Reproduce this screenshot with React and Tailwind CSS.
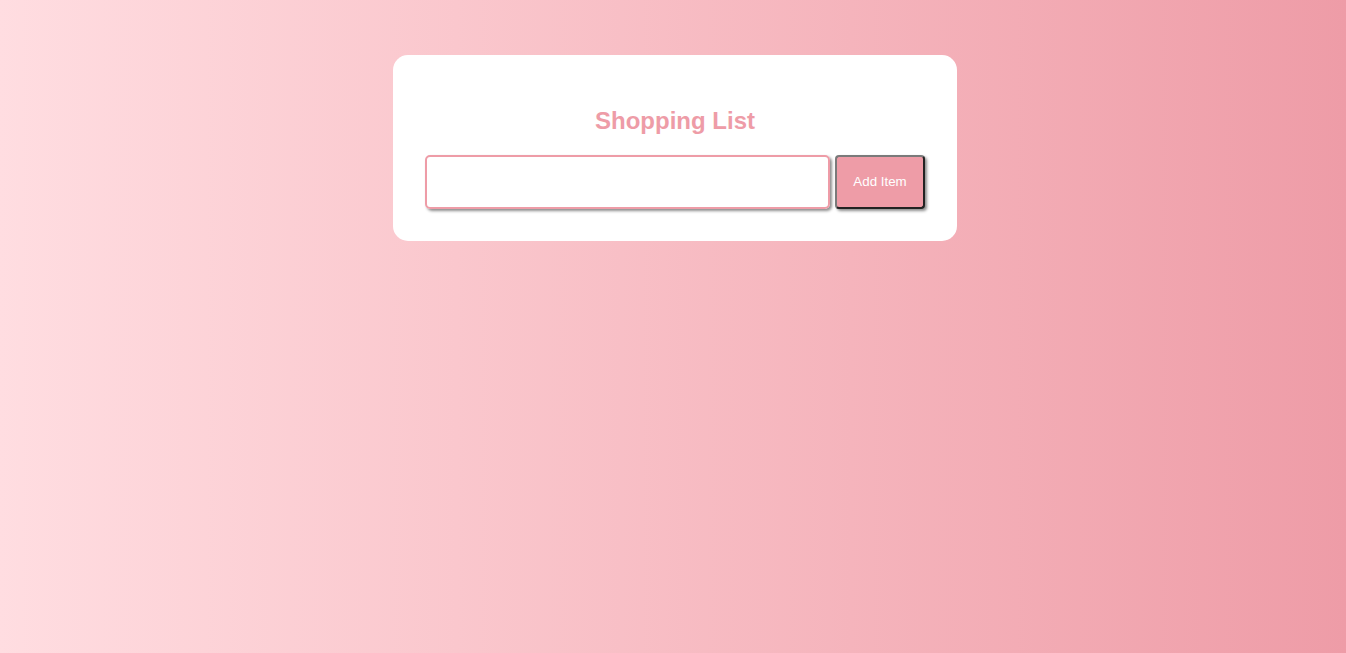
import { useState } from 'react';

export default function App() {
    const [item, setItem] = useState('');
    const [items, setItems] = useState([]);

    const addItem = () => {
        if (!item.trim()) return;
        setItems([...items, item.trim()]);
        setItem('');
    };

    return (
        <div className="min-h-[653px] w-full bg-gradient-to-r from-[#ffdde1] to-[#ee9ca7] font-['Liberation_Sans',Arial,sans-serif] pt-[55px] pl-1">
            <div className="mx-auto w-[564px] bg-white rounded-[15px] p-8">
                <h2 className="text-center text-[24px] leading-[28px] font-bold text-[#ee9ca7] mt-[20px] mb-[20px]">
                    Shopping List
                </h2>
                <div className="flex gap-[5px]">
                    <input
                        type="text"
                        value={item}
                        onChange={(e) => setItem(e.target.value)}
                        className="flex-1 h-[54px] px-[15px] text-base border-2 border-[#ee9ca7] rounded-[5px] outline-none shadow-[2px_2px_3px_rgba(0,0,0,0.45)]"
                    />
                    <button
                        onClick={addItem}
                        className="w-[90px] h-[54px] bg-[#ee9ca7] text-white text-[13.33px] rounded-[4px] border-2 border-t-[#7a7a7a] border-l-[#7a7a7a] border-r-[#222] border-b-[#222] shadow-[2px_2px_3px_rgba(0,0,0,0.45)]"
                    >
                        Add Item
                    </button>
                </div>
                {items.length > 0 && (
                    <ul className="mt-4 space-y-2">
                        {items.map((it, i) => (
                            <li key={i} className="text-[#555]">{it}</li>
                        ))}
                    </ul>
                )}
            </div>
        </div>
    );
}
